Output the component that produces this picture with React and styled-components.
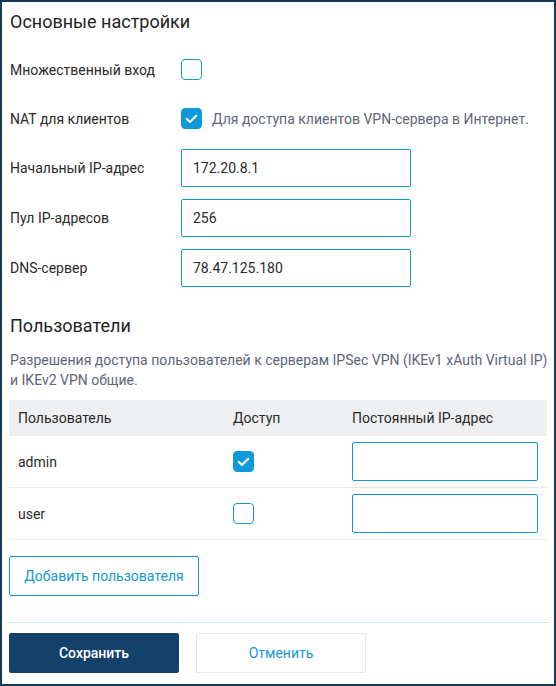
import React, { useState } from "react";
import styled, { createGlobalStyle } from "styled-components";

const GlobalStyle = createGlobalStyle`
  html, body {
    margin: 0;
    padding: 0;
    background: #ffffff;
  }
  body {
    font-family: Roboto, "Liberation Sans", Arial, sans-serif;
    font-size: 14px;
    color: #2a2a2a;
  }
  * {
    box-sizing: border-box;
  }
`;

const Panel = styled.div`
  width: 556px;
  height: 686px;
  border: 2px solid #153a57;
  padding: 8px 7px 0;
  display: flex;
  flex-direction: column;
  background: #fff;
`;

const SectionTitle = styled.h2`
  margin: 0 0 ${(p) => p.$after || 0}px;
  margin-top: ${(p) => p.$before || 0}px;
  padding-left: 1px;
  font-size: 18px;
  line-height: 24px;
  font-weight: 400;
  color: #222;
`;

const Form = styled.div`
  display: flex;
  flex-direction: column;
  gap: 12px;
`;

const FormRow = styled.div`
  display: flex;
  align-items: center;
  height: ${(p) => (p.$compact ? 37 : 38)}px;
`;

const Label = styled.div`
  width: 172px;
  flex-shrink: 0;
  padding-left: 1px;
  color: #2a2a2a;
`;

const Hint = styled.span`
  margin-left: 10px;
  color: #5d6678;
`;

const TextInput = styled.input`
  width: ${(p) => p.$width || 230}px;
  height: ${(p) => p.$height || 38}px;
  border: 1px solid #1598d6;
  border-radius: 2px;
  padding: 0 11px;
  font: inherit;
  font-size: 14px;
  color: #2a2a2a;
  outline: none;
  background: #fff;
`;

const Box = styled.span`
  display: inline-flex;
  align-items: center;
  justify-content: center;
  width: 21px;
  height: 21px;
  border: 1.5px solid #1598d6;
  border-radius: 4px;
  background: ${(p) => (p.$checked ? "#0e9ad8" : "#fff")};
  border-color: ${(p) => (p.$checked ? "#0e9ad8" : "#1598d6")};
  cursor: pointer;
  flex-shrink: 0;
`;

const Description = styled.p`
  margin: 12px -8px 10px 0;
  line-height: 20px;
  color: #5d6678;
  padding-left: 1px;
  white-space: nowrap;
`;

const Table = styled.div`
  display: flex;
  flex-direction: column;
`;

const TableRow = styled.div`
  display: grid;
  grid-template-columns: 215px 119px 1fr;
  align-items: center;
  height: ${(p) => (p.$head ? 36 : 52)}px;
  background: ${(p) => (p.$head ? "#eeeff1" : "transparent")};
  border-bottom: ${(p) => (p.$head ? "none" : "1px solid #e9eaec")};
`;

const Cell = styled.div`
  padding-left: 9px;
  display: flex;
  align-items: center;
  color: #2a2a2a;
`;

const OutlineButton = styled.button`
  width: ${(p) => p.$width}px;
  height: 40px;
  background: #fff;
  border: 1px solid ${(p) => (p.$muted ? "#e7e8ea" : "#1598d6")};
  border-radius: 2px;
  color: #1598d6;
  font: inherit;
  font-size: 14px;
  cursor: pointer;
`;

const PrimaryButton = styled.button`
  width: 170px;
  height: 40px;
  background: #14416a;
  border: none;
  border-radius: 2px;
  color: #fff;
  font: inherit;
  font-size: 14px;
  font-weight: 500;
  cursor: pointer;
`;

const AddRow = styled.div`
  margin-top: 16px;
`;

const Divider = styled.hr`
  margin: 26px -2px 10px -2px;
  border: none;
  border-top: 1px solid #d5e3f0;
`;

const Footer = styled.div`
  display: flex;
  gap: 17px;
`;

const Checkbox = ({ checked, onChange }) => (
  <Box $checked={checked} onClick={() => onChange(!checked)}>
    {checked && (
      <svg width="13" height="10" viewBox="0 0 13 10">
        <polyline
          points="1.8,5 5,8 11.2,1.8"
          fill="none"
          stroke="#fff"
          strokeWidth="2.2"
          strokeLinecap="round"
          strokeLinejoin="round"
        />
      </svg>
    )}
  </Box>
);

const App = () => {
  const [multiLogin, setMultiLogin] = useState(false);
  const [nat, setNat] = useState(true);
  const [users, setUsers] = useState([
    { name: "admin", access: true, ip: "" },
    { name: "user", access: false, ip: "" },
  ]);

  const setUser = (index, patch) =>
    setUsers((list) => list.map((u, i) => (i === index ? { ...u, ...patch } : u)));

  return (
    <>
      <GlobalStyle />
      <Panel>
        <SectionTitle $after={17}>Основные настройки</SectionTitle>
        <Form>
          <FormRow $compact>
            <Label>Множественный вход</Label>
            <Checkbox checked={multiLogin} onChange={setMultiLogin} />
          </FormRow>
          <FormRow $compact>
            <Label>NAT для клиентов</Label>
            <Checkbox checked={nat} onChange={setNat} />
            <Hint>Для доступа клиентов VPN-сервера в Интернет.</Hint>
          </FormRow>
          <FormRow>
            <Label>Начальный IP-адрес</Label>
            <TextInput defaultValue="172.20.8.1" />
          </FormRow>
          <FormRow>
            <Label>Пул IP-адресов</Label>
            <TextInput defaultValue="256" />
          </FormRow>
          <FormRow>
            <Label>DNS-сервер</Label>
            <TextInput defaultValue="78.47.125.180" />
          </FormRow>
        </Form>

        <SectionTitle $before={27}>Пользователи</SectionTitle>
        <Description>
          Разрешения доступа пользователей к серверам IPSec VPN (IKEv1 xAuth Virtual IP)
          <br />
          и IKEv2 VPN общие.
        </Description>

        <Table>
          <TableRow $head>
            <Cell>Пользователь</Cell>
            <Cell>Доступ</Cell>
            <Cell>Постоянный IP-адрес</Cell>
          </TableRow>
          {users.map((u, i) => (
            <TableRow key={u.name}>
              <Cell>{u.name}</Cell>
              <Cell>
                <Checkbox checked={u.access} onChange={(v) => setUser(i, { access: v })} />
              </Cell>
              <Cell>
                <TextInput
                  $width={186}
                  $height={39}
                  value={u.ip}
                  onChange={(e) => setUser(i, { ip: e.target.value })}
                />
              </Cell>
            </TableRow>
          ))}
        </Table>

        <AddRow>
          <OutlineButton $width={190}>Добавить пользователя</OutlineButton>
        </AddRow>

        <Divider />

        <Footer>
          <PrimaryButton>Сохранить</PrimaryButton>
          <OutlineButton $width={170} $muted>
            Отменить
          </OutlineButton>
        </Footer>
      </Panel>
    </>
  );
};

export default App;
